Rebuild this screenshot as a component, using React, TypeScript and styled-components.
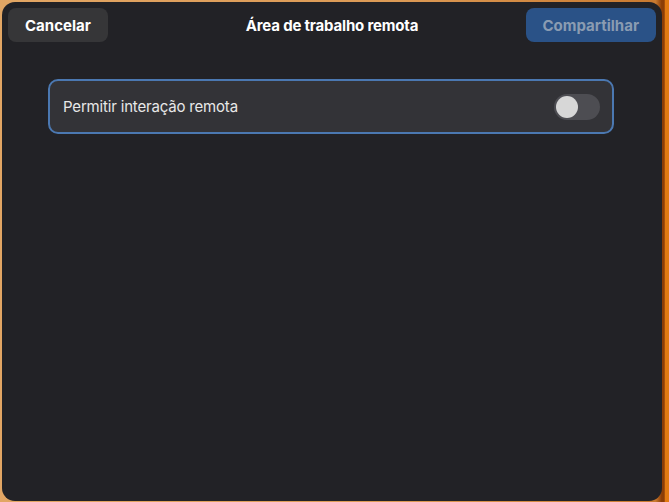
import React, { useState } from 'react';
import styled, { createGlobalStyle } from 'styled-components';

const GlobalStyle = createGlobalStyle`
  html, body {
    margin: 0;
    padding: 0;
    height: 100%;
  }
  body {
    font-family: Inter, "Noto Sans", sans-serif;
    background: linear-gradient(90deg, #e2a664 0%, #dc9a55 60%, #c97a30 98%, #8c3d06 98.9%, #8c3d06 99.3%, #e27a12 99.4%);
    overflow: hidden;
  }
`

const Window = styled.div`
  margin: 2px 7px 0 2px;
  height: 499px;
  background: #222226;
  border-radius: 13px;
  display: flex;
  flex-direction: column;
  box-sizing: border-box;
`

const Header = styled.div`
  display: grid;
  grid-template-columns: 1fr auto 1fr;
  align-items: center;
  padding: 6px 6px 0 6px;
`

const Button = styled.button<{ $primary?: boolean }>`
  justify-self: ${p => (p.$primary ? 'end' : 'start')};
  height: 34px;
  padding: 0 17px;
  border: none;
  border-radius: 8px;
  font-family: Inter, "Noto Sans", sans-serif;
  font-size: 15px;
  font-weight: 700;
  background: ${p => (p.$primary ? '#2a5287' : '#363638')};
  color: ${p => (p.$primary ? '#8a9cb2' : '#ffffff')};
  cursor: pointer;
`

const Title = styled.div`
  color: #ffffff;
  font-size: 15px;
  font-weight: 700;
  letter-spacing: -0.18px;
`

const Content = styled.div`
  padding: 37px 48px 0 46px;
`

const Card = styled.div`
  height: 55px;
  box-sizing: border-box;
  display: flex;
  align-items: center;
  justify-content: space-between;
  padding: 0 12px 0 13px;
  background: #333337;
  border: 2px solid #4b78b1;
  border-radius: 10px;
`

const Label = styled.span`
  color: #e8e8e8;
  font-size: 15px;
  letter-spacing: -0.18px;
`

const Track = styled.button<{ $on: boolean }>`
  width: 46px;
  height: 26px;
  border: none;
  padding: 2px;
  border-radius: 13px;
  background: ${p => (p.$on ? '#3a6fb5' : '#4d4d52')};
  display: flex;
  justify-content: ${p => (p.$on ? 'flex-end' : 'flex-start')};
  cursor: pointer;
`

const Knob = styled.span`
  width: 22px;
  height: 22px;
  border-radius: 50%;
  background: #d7d7d7;
`

export default function App() {
  const [remote, setRemote] = useState(false);

  return (
    <>
      <GlobalStyle />
      <Window>
        <Header>
          <Button>Cancelar</Button>
          <Title>Área de trabalho remota</Title>
          <Button $primary>Compartilhar</Button>
        </Header>
        <Content>
          <Card>
            <Label>Permitir interação remota</Label>
            <Track $on={remote} onClick={() => setRemote(!remote)}>
              <Knob />
            </Track>
          </Card>
        </Content>
      </Window>
    </>
  )
}
